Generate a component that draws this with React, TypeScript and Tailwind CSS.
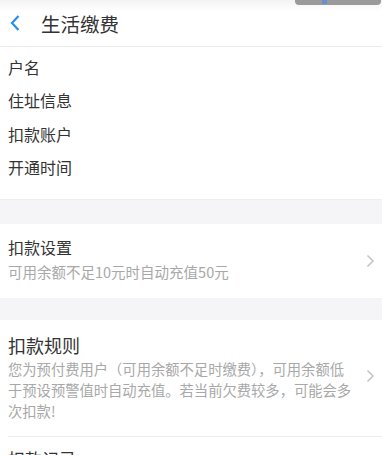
import React from "react";

const font = { fontFamily: '"Noto Sans CJK SC", "Noto Sans", sans-serif' };

function Chevron() {
  return (
    <svg width="9" height="14" viewBox="0 0 9 14" className="shrink-0">
      <path d="M1.5 1.5 L7 7 L1.5 12.5" fill="none" stroke="#c4c4c4" strokeWidth="1.6" />
    </svg>
  );
}

export default function App() {
  return (
    <div className="w-[382px] h-[455px] overflow-hidden bg-white relative text-[#333]" style={font}>
      <div className="absolute top-0 left-[295px] w-[86px] h-[5px] rounded-b-[4px] bg-[#9a9a9a]">
        <div className="absolute left-[27px] top-0 w-[5px] h-[4px] bg-[#6a8fd0]" />
      </div>
      <div className="h-[47px] border-b border-[#ececec] flex items-center bg-gradient-to-b from-[#f3f3f3] to-white to-[25%]">
        <svg width="12" height="18" viewBox="0 0 12 18" className="ml-[9px]">
          <path d="M9.5 2 L3 9 L9.5 16" fill="none" stroke="#2a8ef0" strokeWidth="2.2" />
        </svg>
        <div className="ml-[20px] text-[19.5px] text-[#333] leading-none mt-[1px]">生活缴费</div>
      </div>
      <div className="pt-[3px] pb-[15px] px-[8px]">
        {["户名", "住址信息", "扣款账户", "开通时间"].map((t) => (
          <div key={t} className="h-[33.5px] flex items-center text-[16px] leading-none">
            {t}
          </div>
        ))}
      </div>
      <div className="h-[25px] bg-[#f5f5f8] border-t border-[#eeeef0]" />
      <div className="h-[74px] flex items-center pl-[8px] pr-[7px]">
        <div className="flex-1">
          <div className="text-[16px] leading-none mt-[-3px]">扣款设置</div>
          <div className="text-[14.5px] leading-none text-[#a8a8a8] mt-[10px]">可用余额不足10元时自动充值50元</div>
        </div>
        <Chevron />
      </div>
      <div className="h-[22px] bg-[#f5f5f8]" />
      <div className="pl-[8px] pr-[7px] pt-[16px] pb-[15px] flex items-start">
        <div className="flex-1">
          <div className="text-[18px] leading-none">扣款规则</div>
          <div className="text-[14.3px] leading-[21px] text-[#a8a8a8] mt-[4px] w-[346px]">
            您为预付费用户（可用余额不足时缴费），可用余额低于预设预警值时自动充值。若当前欠费较多，可能会多次扣款!
          </div>
        </div>
        <div className="mt-[33px]">
          <Chevron />
        </div>
      </div>
      <div className="ml-[8px] border-t border-[#ececec] pt-[13px] text-[17px] leading-none">扣款记录</div>
    </div>
  );
}
